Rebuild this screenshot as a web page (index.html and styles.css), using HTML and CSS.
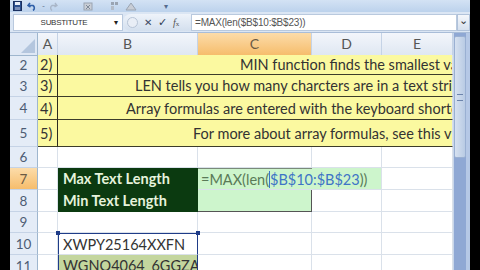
FILE: index.html
```html
<!DOCTYPE html>
<html lang="en">
<head>
    <meta charset="UTF-8">
    <meta name="viewport" content="width=device-width, initial-scale=1.0">
    <title>Excel - MIN and MAX text length</title>
    <link rel="stylesheet" href="styles.css">
</head>
<body>

    <div class="app">
        <div class="qat">
            <svg class="qat-icon" width="9" height="10" viewBox="0 0 9 10">
                <rect x="0.5" y="0.5" width="8" height="9" fill="#2b4f8e" stroke="#1a3060"/>
                <rect x="2" y="1" width="5" height="3" fill="#e8eef8"/>
                <rect x="2" y="6" width="5" height="3" fill="#7a8fb8"/>
            </svg>
            <svg class="qat-icon" width="10" height="10" viewBox="0 0 10 10">
                <path d="M3 2 L1 4.5 L3.5 6" fill="none" stroke="#2f5fa8" stroke-width="1.6"/>
                <path d="M1.5 4.5 H6 A3 3 0 0 1 6 9.5" fill="none" stroke="#2f5fa8" stroke-width="1.6"/>
            </svg>
            <span class="qat-sep">-</span>
            <svg class="qat-icon faded" width="8" height="10" viewBox="0 0 8 10">
                <path d="M5 2 L7 4.5 L4.5 6 M6.5 4.5 H2 A3 3 0 0 0 2 9.5" fill="none" stroke="#a9b6c8" stroke-width="1.4"/>
            </svg>
            <svg class="qat-icon gap" width="10" height="10" viewBox="0 0 10 10">
                <rect x="1" y="2" width="8" height="7" fill="#c9ced6" stroke="#9aa4b2"/>
                <path d="M3 4 L7 8 M7 4 L3 8" stroke="#7f8a99"/>
            </svg>
            <svg class="qat-icon gap2" width="10" height="10" viewBox="0 0 10 10">
                <rect x="1" y="1" width="3" height="3" fill="#9aa4b2"/>
                <rect x="5" y="1" width="3" height="3" fill="#9aa4b2"/>
                <rect x="1" y="5" width="3" height="4" fill="#b4bcc8"/>
            </svg>
            <svg class="qat-icon" width="12" height="10" viewBox="0 0 12 10">
                <path d="M1 9 L6 2 L11 9 Z" fill="#c8cdd6" stroke="#9aa4b2"/>
            </svg>
            <span class="qat-more">▾</span>
        </div>

        <div class="fbar">
            <div class="namebox">
                <span class="name">SUBSTITUTE</span>
                <span class="name-drop">▾</span>
            </div>
            <div class="fbtns">
                <span class="fb-round"></span>
                <span class="fb-x">✕</span>
                <span class="fb-ok">✓</span>
                <span class="fb-fx"><i>f</i><small>x</small></span>
            </div>
            <div class="finput">=MAX(len($B$10:$B$23))</div>
            <div class="fexpand">⌄</div>
        </div>

        <div class="main">
            <div class="sheet">
                <div class="row head">
                    <div class="corner"><span class="tri"></span></div>
                    <div class="colh">A</div>
                    <div class="colh">B</div>
                    <div class="colh active">C</div>
                    <div class="colh">D</div>
                    <div class="colh">E</div>
                </div>

                <div class="row note-row r2">
                    <div class="rowh">2</div>
                    <div class="cell num">2)</div>
                    <div class="cell note">MIN function finds the smallest value.</div>
                </div>
                <div class="row note-row r3">
                    <div class="rowh">3</div>
                    <div class="cell num">3)</div>
                    <div class="cell note">LEN tells you how many charcters are in a text string.</div>
                </div>
                <div class="row note-row r4">
                    <div class="rowh">4</div>
                    <div class="cell num">4)</div>
                    <div class="cell note">Array formulas are entered with the keyboard shortcut Ctrl + Shift + Enter.</div>
                </div>
                <div class="row note-row r5">
                    <div class="rowh">5</div>
                    <div class="cell num">5)</div>
                    <div class="cell note">For more about array formulas, see this video.</div>
                </div>

                <div class="row r6">
                    <div class="rowh">6</div>
                    <div class="cell"></div>
                    <div class="cell"></div>
                    <div class="cell"></div>
                    <div class="cell"></div>
                    <div class="cell"></div>
                </div>
                <div class="row r7">
                    <div class="rowh active">7</div>
                    <div class="cell"></div>
                    <div class="cell label">Max Text Length</div>
                    <div class="cell edit">=MAX(len(<span class="ref">$B$10:$B$23</span>))</div>
                    <div class="cell fill"></div>
                    <div class="cell"></div>
                </div>
                <div class="row r8">
                    <div class="rowh">8</div>
                    <div class="cell"></div>
                    <div class="cell label">Min Text Length</div>
                    <div class="cell result"></div>
                    <div class="cell"></div>
                    <div class="cell"></div>
                </div>
                <div class="row r9">
                    <div class="rowh">9</div>
                    <div class="cell"></div>
                    <div class="cell"></div>
                    <div class="cell"></div>
                    <div class="cell"></div>
                    <div class="cell"></div>
                </div>
                <div class="row r10">
                    <div class="rowh">10</div>
                    <div class="cell"></div>
                    <div class="cell code range-top">XWPY25164XXFN<span class="handle hl"></span><span class="handle hr"></span></div>
                    <div class="cell"></div>
                    <div class="cell"></div>
                    <div class="cell"></div>
                </div>
                <div class="row r11">
                    <div class="rowh">11</div>
                    <div class="cell"></div>
                    <div class="cell code olive">WGNO4064_6GGZA</div>
                    <div class="cell"></div>
                    <div class="cell"></div>
                    <div class="cell"></div>
                </div>
            </div>

            <div class="vscroll">
                <div class="thumb"><span class="grip"></span></div>
            </div>
        </div>
    </div>

</body>
</html>
```

FILE: styles.css
```css
body {
    margin: 0;
    background-color: #000;
    width: 480px;
    height: 270px;
    overflow: hidden;
    font-family: Lato, "Open Sans", sans-serif;
}
.app {
    margin-left: 10px;
    width: 460px;
    height: 270px;
    display: flex;
    flex-direction: column;
    background: #fff;
    overflow: hidden;
}

/* quick access toolbar */
.qat {
    flex-shrink: 0;
    height: 12px;
    display: flex;
    align-items: center;
    gap: 5px;
    padding-left: 3px;
    background: linear-gradient(#d3e2f4, #bcd2ec);
}
.qat-icon {
    display: block;
}
.qat-icon.gap {
    margin-left: 20px;
}
.qat-icon.gap2 {
    margin-left: 12px;
}
.qat-sep, .qat-more {
    font-size: 8px;
    color: #556b8e;
}
.qat-more {
    margin-left: 22px;
}

/* formula bar */
.fbar {
    flex-shrink: 0;
    height: 21px;
    display: flex;
    align-items: center;
    background: #dbe6f4;
    border-bottom: 1px solid #a9bdd8;
    box-sizing: border-box;
}
.namebox {
    width: 110px;
    height: 17px;
    margin-left: 3px;
    background: #fff;
    border: 1px solid #b9c9de;
    box-sizing: border-box;
    display: flex;
    align-items: center;
    font-family: "Liberation Sans Narrow", "Liberation Sans", sans-serif;
    font-size: 8px;
    color: #333;
}
.name {
    flex: 1;
    text-align: center;
    letter-spacing: -0.3px;
}
.name-drop {
    width: 8px;
    color: #222;
    font-size: 8px;
}
.fbtns {
    width: 68px;
    height: 17px;
    display: flex;
    align-items: center;
    gap: 6px;
    padding-left: 4px;
    box-sizing: border-box;
    background: linear-gradient(#eef3fa, #d3dfee);
    border-radius: 8px 0 0 8px;
    font-size: 10px;
    color: #3a4660;
}
.fb-round {
    width: 9px;
    height: 9px;
    border-radius: 50%;
    border: 1px solid #b7c4d6;
    background: #e9eef6;
}
.fb-x {
    font-size: 10px;
    color: #3d4a63;
}
.fb-ok {
    font-size: 11px;
    color: #2d3a52;
}
.fb-fx {
    font-family: "Liberation Serif", serif;
    font-size: 10px;
    color: #555;
}
.fb-fx small {
    font-size: 7px;
}
.finput {
    flex: 1;
    height: 17px;
    background: #fff;
    border: 1px solid #b9c9de;
    box-sizing: border-box;
    padding-left: 3px;
    font-family: "Liberation Sans", sans-serif;
    font-size: 10px;
    line-height: 15px;
    color: #555;
    letter-spacing: -0.2px;
}
.fexpand {
    width: 13px;
    height: 17px;
    background: linear-gradient(#f4f7fb, #d6e0ee);
    border: 1px solid #b0c2da;
    box-sizing: border-box;
    font-size: 11px;
    line-height: 9px;
    text-align: center;
    color: #333;
}

/* sheet grid */
.main {
    flex: 1;
    min-height: 0;
    display: flex;
}
.sheet {
    width: 443px;
    overflow: hidden;
    font-size: 14.5px;
    color: #444;
}
.row {
    display: grid;
    grid-template-columns: 28px 20px 140px 114px 70px 71px;
    height: 22px;
}
.row.r2 { height: 20px; }
.row.r4 { height: 23px; }
.row.r5 { height: 27px; }
.row.r6 { height: 21px; }
.row.r9 { height: 21px; }

.corner {
    background: #dfe8f5;
    border-right: 1px solid #9eb6ce;
    border-bottom: 1px solid #9eb6ce;
    position: relative;
    overflow: hidden;
}
.tri {
    position: absolute;
    right: 2px;
    bottom: 2px;
    border-left: 14px solid transparent;
    border-bottom: 14px solid #b4c6de;
}
.colh {
    background: linear-gradient(#f3f6fb, #dfe7f2);
    border-right: 1px solid #c5d3e6;
    border-bottom: 1px solid #9eb6ce;
    text-align: center;
    line-height: 22px;
    font-size: 14px;
    color: #555;
}
.colh.active {
    background: linear-gradient(#fcdcaa, #f6bd6c);
    border-bottom-color: #e0a050;
    color: #6b5a44;
}
.rowh {
    background: #e4ecf7;
    border-right: 1px solid #9eb6ce;
    border-bottom: 1px solid #c5d3e6;
    font-size: 13.5px;
    color: #4d5c74;
    display: flex;
    align-items: center;
    justify-content: center;
}
.rowh.active {
    background: linear-gradient(#fcdcaa, #f6bd6c);
    color: #6b5a44;
}
.cell {
    border-right: 1px solid #dae1ea;
    border-bottom: 1px solid #dae1ea;
    white-space: nowrap;
    display: flex;
    align-items: center;
    min-width: 0;
}

/* yellow notes block */
.note-row .cell {
    background: #fbf9a0;
    border-bottom: 1px solid #3c3c2a;
}
.cell.num {
    border-right: 1px solid #2c2c20;
    padding-left: 2px;
    color: #333;
}
.cell.note {
    grid-column: 3 / 7;
    overflow: hidden;
    color: #333;
}
.r2 .note { padding-left: 182px; }
.r3 .note { padding-left: 77px; }
.r4 .note { padding-left: 68px; }
.r5 .note { padding-left: 135px; }

/* lookup area */
.cell.label {
    background: #0b3a10;
    color: #e6f3dc;
    font-weight: bold;
    padding-left: 5px;
    border-color: #0b3a10;
}
.cell.edit {
    background: #cdf5cc;
    border-top: 1px solid #7a8a7a;
    border-right: none;
    padding-left: 3px;
    color: #5a7a58;
    overflow: visible;
    position: relative;
    z-index: 1;
}
.cell.fill {
    background: #cdf5cc;
}
.ref {
    color: #3e74c6;
    border-left: 1px solid #3e74c6;
}
.cell.result {
    background: #cdf5cc;
    border-right: 1px solid #555;
    border-bottom: 1px solid #555;
}
.cell.code {
    padding-left: 4px;
    color: #333;
    overflow: hidden;
    position: relative;
}
.cell.range-top {
    border-top: 1px solid #1f3c88;
    border-left: 1px solid #1f3c88;
    border-right: 1px solid #1f3c88;
    overflow: visible;
}
.handle {
    position: absolute;
    top: -3px;
    width: 4px;
    height: 4px;
    background: #1f3c88;
}
.hl { left: -3px; }
.hr { right: -3px; }
.cell.olive {
    background: #c4d69e;
    border-left: 1px solid #1f3c88;
    border-right: 1px solid #1f3c88;
}

/* vertical scrollbar */
.vscroll {
    width: 17px;
    background: #8fa8d4;
    border-left: 1px solid #c8d6ea;
    border-right: 4px solid #b5c8e6;
    box-sizing: border-box;
    display: flex;
    flex-direction: column;
}
.thumb {
    height: 120px;
    margin-top: 3px;
    background: linear-gradient(90deg, #d6e1f0, #b9cbe4);
    border: 1px solid #9ab0d2;
    border-radius: 2px;
    display: flex;
    align-items: center;
    justify-content: center;
}
.grip {
    width: 6px;
    height: 5px;
    border-top: 1px solid #6c84ac;
    border-bottom: 1px solid #6c84ac;
}
```
